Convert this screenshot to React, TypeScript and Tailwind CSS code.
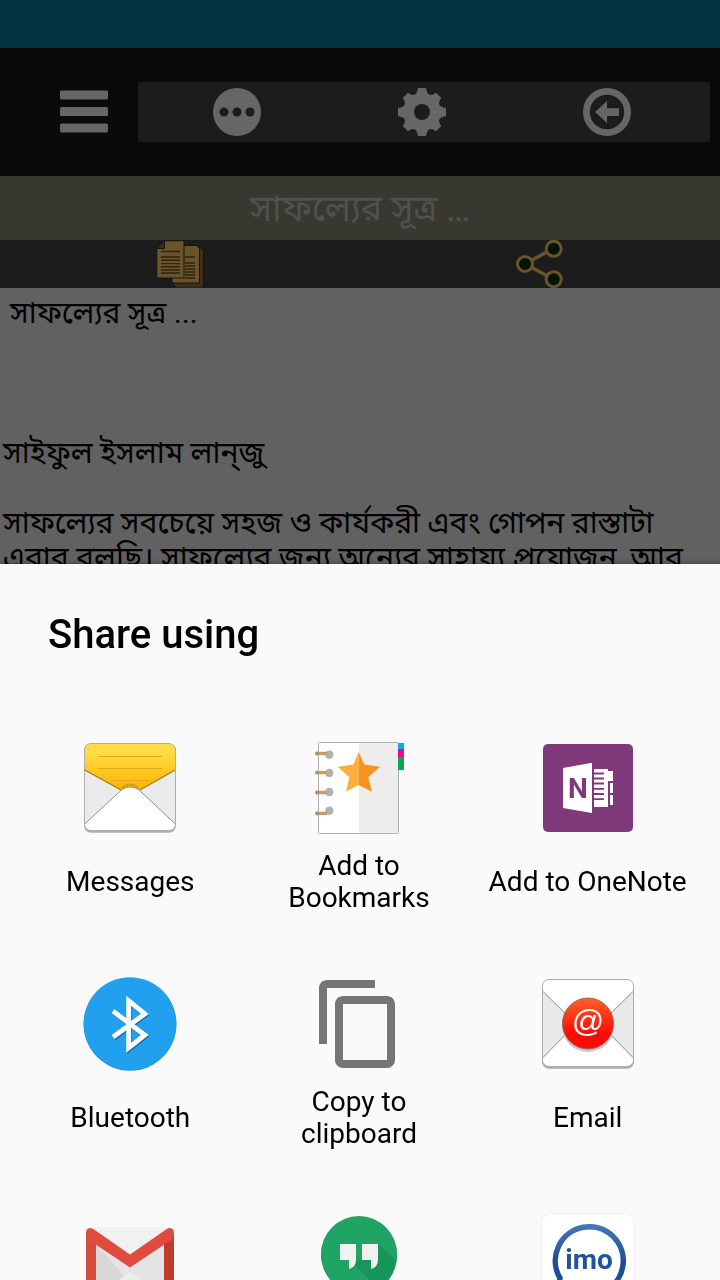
import type { ReactNode } from "react";

const MenuIcon = () => (
  <svg viewBox="0 0 48 48" className="size-12" fill="#666666">
    <rect x="0" y="2.5" width="48" height="9" rx="1.5" />
    <rect x="0" y="19" width="48" height="9" rx="1.5" />
    <rect x="0" y="35.5" width="48" height="9" rx="1.5" />
  </svg>
);

const MoreIcon = () => (
  <svg viewBox="0 0 48 48" className="size-12">
    <circle cx="24" cy="24" r="24" fill="#666666" />
    <circle cx="11" cy="24" r="4.5" fill="#1c1c1c" />
    <circle cx="24" cy="24" r="4.5" fill="#1c1c1c" />
    <circle cx="37" cy="24" r="4.5" fill="#1c1c1c" />
  </svg>
);

const GearIcon = () => (
  <svg viewBox="0 0 48 48" className="size-12" fill="#666666">
    {[0, 90, 180, 270].map((angle) => (
      <path
        key={angle}
        transform={`rotate(${angle} 24 24)`}
        d="M24 24L20 0H28Q29 6 32 7Q35 7.2 38 4.7L43.3 10Q40.8 13 41 16Q42 19 48 20V28L24 24Z"
      />
    ))}
    <circle cx="24" cy="24" r="8" fill="#1c1c1c" />
  </svg>
);

const BackIcon = () => (
  <svg viewBox="0 0 48 48" className="size-12">
    <circle cx="24" cy="24" r="20.6" fill="none" stroke="#666666" strokeWidth="6.8" />
    <path d="M12 24L24 13V20.3H36V28H24V35Z" fill="#666666" />
  </svg>
);

const PagesIcon = () => (
  <svg viewBox="0 0 48 48" className="size-12">
    <path d="M20 42.5H43V6.5L47.5 10V48H21L16 43Z" fill="#3d301a" stroke="#1a1408" />
    <path d="M16 5.5H40.5L43.5 8.5V43H16Z" fill="#6b542c" stroke="#1a1408" />
    <path d="M8.5 .8H28V38H.8V8.5Z" fill="#6b542c" stroke="#1a1408" />
    <path d="M8.5 .8V8.5H.8Z" fill="#3d301a" stroke="#1a1408" />
    <path
      d="M5 11.5H24M5 17H24M5 20.3H24M5 23.6H24M5 26.8H24M5 30H24M5 33H24M29 17H39M29 23H39M29 26H39M29 29H39M29 32H39M29 35H39M29 38H39"
      stroke="#2e2310"
      strokeWidth="1.4"
    />
  </svg>
);

const ShareIcon = () => (
  <svg viewBox="0 0 48 48" className="size-12" fill="#001400" stroke="#6b542c" strokeWidth="3">
    <path d="M37.7 8.3L9 24L37.7 39.3" fill="none" strokeWidth="3.5" />
    <circle cx="9" cy="24" r="7.5" />
    <circle cx="37.7" cy="8.8" r="7.5" />
    <circle cx="37.7" cy="39.2" r="7.5" />
  </svg>
);

const MessagesIcon = () => (
  <svg viewBox="0 0 96 96" className="size-24">
    <defs>
      <linearGradient id="msgTop" x1="0" y1="0" x2="0" y2="1">
        <stop offset="0.2" stopColor="#ffdc45" />
        <stop offset="1" stopColor="#fdb400" />
      </linearGradient>
      <clipPath id="msgClip">
        <rect x="2.5" y="3.5" width="91" height="87" rx="6.5" />
      </clipPath>
    </defs>
    <rect x="2" y="4" width="92" height="88.7" rx="7" fill="#adadad" />
    <g clipPath="url(#msgClip)">
      <rect width="96" height="96" fill="#ebebeb" />
      <path d="M2 3H94V29.5L58 50Q48 43 39 50L2 29.5Z" fill="url(#msgTop)" />
      <path d="M2 29.5L39 50M94 29.5L58 50" stroke="#a87a12" strokeWidth="1.2" />
      <path d="M39 49Q42 43.5 48 43.5T58 49L55 48Q48 44 42 48Z" fill="#d99b0b" />
      <path d="M16 16.5H80M16 28.5H80M29 40.5H67" stroke="#dcac18" />
      <path d="M1 85.5L39.5 50Q43 47 48 47T57 50L95 85.5V96H1Z" fill="#ffffff" stroke="#8f8f8f" />
    </g>
    <rect x="2.5" y="3.5" width="91" height="87" rx="6.5" fill="none" stroke="#adadad" />
  </svg>
);

const BookmarksIcon = () => (
  <svg viewBox="0 0 96 96" className="size-24">
    <rect x="7.5" y="2.5" width="80" height="91" rx="1" fill="#ffffff" stroke="#b0b0b0" />
    <path d="M48 3H87V93H48Z" fill="#eeedec" />
    <rect x="87" y="3" width="6" height="6.5" fill="#00aeef" />
    <rect x="87" y="9" width="6" height="8.5" fill="#f0048b" />
    <rect x="87" y="17" width="6" height="13" fill="#07a651" />
    {[[14.7, 13.5], [33, 32.6], [52, 52.5], [70.7, 73.4]].map(([ring, bar]) => (
      <g key={ring}>
        <circle cx="18.3" cy={ring} r="4.2" fill="#b1b1b1" />
        <path d={`M5 ${bar}H16`} stroke="#c69c6d" strokeWidth="3.4" />
        <circle cx="6" cy={bar} r="1.9" fill="#b08d68" />
      </g>
    ))}
    <path d="M47.7 12L42.3 24.5L26.7 26.7L38.3 37.3L35 51.7L47.7 45Z" fill="#fbb03b" />
    <path d="M47.7 12L53.3 24.5L69 26.7L57.3 37.3L61 51.7L47.7 45Z" fill="#f7931e" />
  </svg>
);

const OneNoteIcon = () => (
  <svg viewBox="0 0 96 96" className="size-24">
    <rect x="3" y="4" width="90" height="88" rx="5" fill="#80397b" />
    <path d="M23 28L52 22.7V73L23 68Z" fill="#ffffff" />
    <path d="M54 29H68V31H73V41H68V67H54Z" fill="#ffffff" />
    <path d="M54 33.5H64M54 38.5H64M54 43.5H64M54 48.8H64M54 54H64M54 59.2H64" stroke="#80397b" strokeWidth="1.8" />
    <path d="M70 43H73V53H70ZM70 55H73V65H70Z" fill="#ffffff" />
    <text x="38" y="58" textAnchor="middle" fontSize="28" className="font-['Roboto',sans-serif] font-bold" fill="#80397b">
      N
    </text>
  </svg>
);

const BluetoothIcon = () => (
  <svg viewBox="0 0 96 96" className="size-24" fill="none" strokeWidth="4.8">
    <circle cx="48" cy="48.3" r="46.4" fill="#1b87cb" />
    <circle cx="48" cy="47.6" r="46.3" fill="#21a0ee" />
    <path d="M32 36.2L63.5 60.2L47.5 73.2V26L63.5 39.2L32 62.2" stroke="#1a6fa8" />
    <path d="M31 35.2L62.8 59L46.7 71.8V24.8L62.8 38L31 61" stroke="#ffffff" />
  </svg>
);

const CopyIcon = () => (
  <svg viewBox="0 0 24 24" className="size-24" fill="#757575">
    <path d="M16 1H4c-1.1 0-2 .9-2 2v14h2V3h12V1zm3 4H8c-1.1 0-2 .9-2 2v14c0 1.1.9 2 2 2h11c1.1 0 2-.9 2-2V7c0-1.1-.9-2-2-2zm0 16H8V7h11v14z" />
  </svg>
);

const EmailIcon = () => (
  <svg viewBox="0 0 96 96" className="size-24">
    <defs>
      <linearGradient id="mailDot" x1="0" y1="0" x2="0" y2="1">
        <stop offset="0" stopColor="#ff6126" />
        <stop offset="0.7" stopColor="#ff0a05" />
      </linearGradient>
    </defs>
    <rect x="2" y="4" width="92" height="88.7" rx="7" fill="#adadad" />
    <rect x="2.5" y="3.5" width="91" height="87" rx="6.5" fill="#ffffff" stroke="#adadad" />
    <path d="M3 15.5L36 48L3 81.5ZM93 15.5L60 48L93 81.5Z" fill="#e9e9e9" />
    <path d="M3 15.5L36 48L3 81.5M93 15.5L60 48L93 81.5" fill="none" stroke="#8a8a8a" />
    <circle cx="48" cy="50" r="26" fill="#c9c9c9" />
    <circle cx="48" cy="47.5" r="25.5" fill="url(#mailDot)" stroke="#8d6a62" />
    <text x="48" y="56" textAnchor="middle" fontSize="32" className="font-['Liberation_Sans',sans-serif]" fill="#ffffff">
      @
    </text>
  </svg>
);

const GmailIcon = () => (
  <svg viewBox="0 0 96 96" className="size-24">
    <path d="M8 15H88V84H8Z" fill="#f1f1f1" />
    <path d="M14 32L48 55L82 32V84H14Z" fill="#e4e4e4" />
    <path d="M14 32L46 68L30 84H14Z" fill="#d8d8d8" />
    <path d="M48 60L14 84H82Z" fill="#ededed" />
    <path d="M4 22L14 30V84H8Q4 84 4 80Z" fill="#d54b3d" />
    <path d="M92 22L82 30V84H88Q92 84 92 80Z" fill="#bf3b2c" />
    <path d="M4 21Q4 16 9 16L12 17.5L48 42.5L84 17.5L87 16Q92 16 92 21Q92 26 89 28L48 55.5L7 28Q4 26 4 21Z" fill="#df4c3f" />
  </svg>
);

const HangoutsIcon = () => (
  <svg viewBox="0 0 96 96" className="size-24">
    <path d="M48 5A38 38 0 0 0 48 81V92Q86 72 86 43A38 38 0 0 0 48 5Z" fill="#178a50" />
    <path d="M48 4A38 38 0 0 0 48 80V91Q86 71 86 42A38 38 0 0 0 48 4Z" fill="#1fa463" />
    <path d="M67 32L85 48Q82 66 68 77L38 48H51Z" fill="#18955a" />
    <path d="M29 32H45V48Q45 55 38 57V48H29ZM51 32H67V48Q67 55 60 57V48H51Z" fill="#f1f1f1" />
  </svg>
);

const ImoIcon = () => (
  <svg viewBox="0 0 96 96" className="size-24">
    <defs>
      <linearGradient id="imoRing" x1="0" y1="0" x2="0" y2="1">
        <stop offset="0" stopColor="#4673b5" />
        <stop offset="0.5" stopColor="#1e4f96" />
      </linearGradient>
    </defs>
    <rect x="1.5" y="1.5" width="93" height="93" rx="9" fill="#ffffff" stroke="#f0f0f0" />
    <path d="M20 66A34 34 0 1 1 32 78L18 82Z" fill="none" stroke="url(#imoRing)" strokeWidth="5.5" />
    <text x="49" y="57" textAnchor="middle" fontSize="28" className="font-['Roboto',sans-serif] font-bold" fill="#20539b">
      imo
    </text>
  </svg>
);

const targets: { name: string; icon: ReactNode }[] = [
  { name: "Messages", icon: <MessagesIcon /> },
  { name: "Add to Bookmarks", icon: <BookmarksIcon /> },
  { name: "Add to OneNote", icon: <OneNoteIcon /> },
  { name: "Bluetooth", icon: <BluetoothIcon /> },
  { name: "Copy to clipboard", icon: <CopyIcon /> },
  { name: "Email", icon: <EmailIcon /> },
];

const moreTargets: { name: string; icon: ReactNode }[] = [
  { name: "Gmail", icon: <GmailIcon /> },
  { name: "Hangouts", icon: <HangoutsIcon /> },
  { name: "imo", icon: <ImoIcon /> },
];

const App = () => {
  return (
    <div className="h-screen overflow-hidden bg-[#616161] font-['Roboto','Noto_Sans_Bengali','Noto_Sans',sans-serif]">
      {/* Status bar */}
      <div className="h-12 bg-[#00333f]" />

      {/* Toolbar */}
      <header className="flex h-32 items-center bg-[#0a0a0a] pr-[10px] pl-[60px]">
        <button type="button" aria-label="Menu">
          <MenuIcon />
        </button>
        <div className="ml-[30px] grid h-[60px] flex-1 grid-cols-3 place-items-center bg-[#1c1c1c] pr-[11px] pl-[6px]">
          <button type="button" aria-label="More">
            <MoreIcon />
          </button>
          <button type="button" aria-label="Settings">
            <GearIcon />
          </button>
          <button type="button" aria-label="Back">
            <BackIcon />
          </button>
        </div>
      </header>

      <h1 className="flex h-16 items-center justify-center bg-[#383830] pt-[2px] text-[36px] text-[#505050]">
        সাফল্যের সূত্র …
      </h1>

      <div className="grid h-12 grid-cols-2 place-items-center bg-[#1c1c1c]">
        <button type="button" aria-label="Copy text">
          <PagesIcon />
        </button>
        <button type="button" aria-label="Share text">
          <ShareIcon />
        </button>
      </div>

      {/* Article */}
      <article className="px-[3px] pt-[7px] text-[30px] leading-[35px] whitespace-nowrap text-black">
        <p className="pl-[7px]">সাফল্যের সূত্র ...</p>
        <p className="mt-[105px]">সাইফুল ইসলাম {"লান্\u200dজু"}</p>
        <p className="mt-[35px]">
          সাফল্যের সবচেয়ে সহজ ও কার্যকরী এবং গোপন রাস্তাটা
          <br />
          এবার বলছি। সাফল্যের জন্য অন্যের সাহায্য প্রয়োজন, আর
        </p>
      </article>

      {/* Share sheet */}
      <section
        role="dialog"
        aria-labelledby="share-title"
        className="fixed inset-x-0 top-[564px] bottom-0 overflow-hidden bg-[#fafafa] shadow-[0_0_6px_rgba(0,0,0,0.4)]"
      >
        <h2 id="share-title" className="px-12 pt-[47px] text-[40px] leading-[48px] font-medium text-black">
          Share using
        </h2>
        <div className="mt-[81px] grid grid-cols-3 gap-y-[62px] pr-[18px] pl-4">
          {targets.map((item) => (
            <button key={item.name} type="button" className="flex flex-col items-center gap-[14px]">
              {item.icon}
              <span className="flex h-16 max-w-[200px] items-center text-center text-[28px] leading-8 text-black">
                {item.name}
              </span>
            </button>
          ))}
          {moreTargets.map((item) => (
            <button key={item.name} type="button" aria-label={item.name} className="flex flex-col items-center">
              {item.icon}
            </button>
          ))}
        </div>
      </section>
    </div>
  );
};

export default App;
